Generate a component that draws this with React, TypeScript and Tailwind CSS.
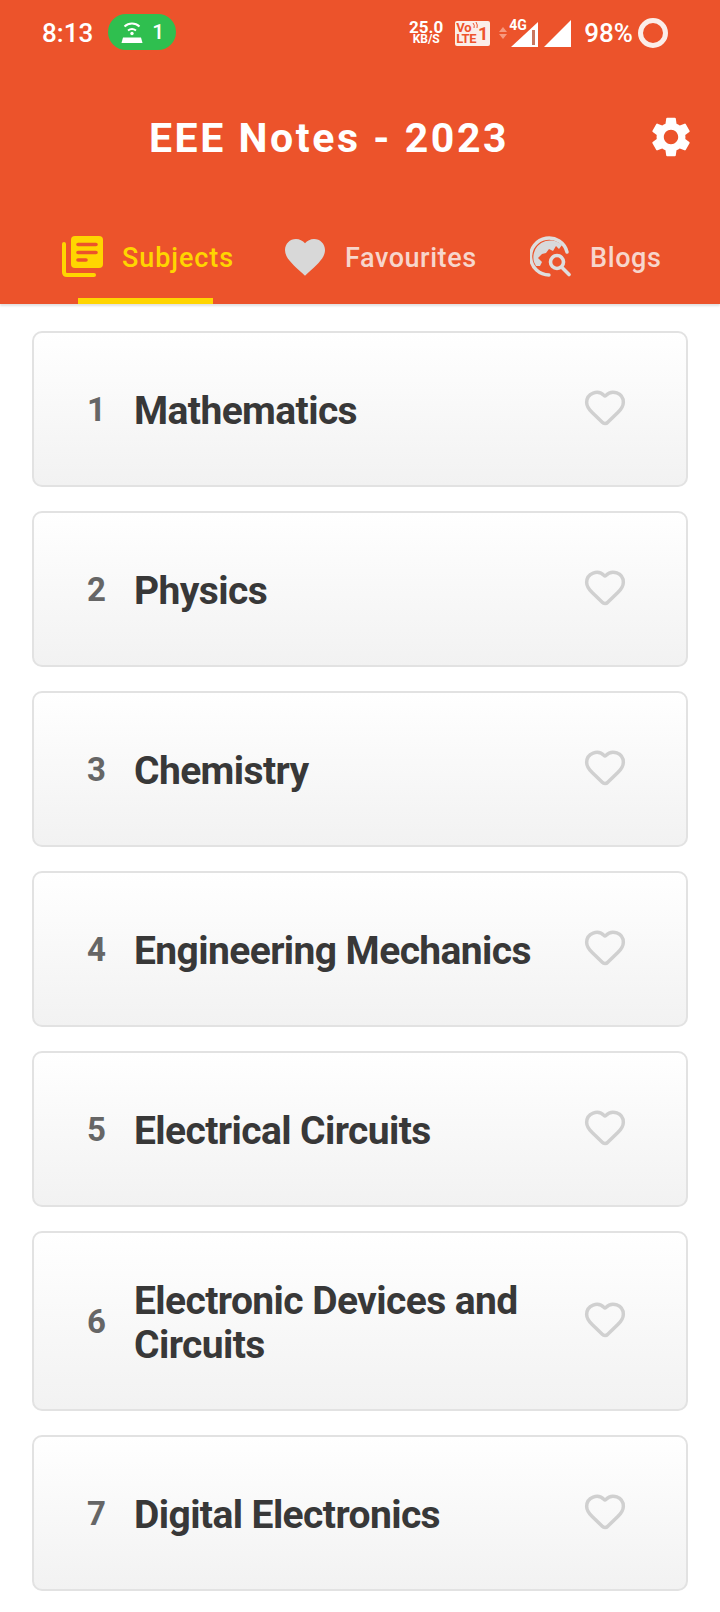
import { Heart } from 'lucide-react';
import { MdFavorite, MdSettings } from 'react-icons/md';

const subjects = [
  'Mathematics',
  'Physics',
  'Chemistry',
  'Engineering Mechanics',
  'Electrical Circuits',
  'Electronic Devices and Circuits',
  'Digital Electronics',
];

function HotspotIcon() {
  return (
    <svg viewBox="0 0 24 24" className="h-[24px] w-[24px]" fill="none" stroke="white" aria-hidden="true">
      <path d="M4.5 6.5a11 11 0 0 1 15 0" strokeWidth="2" />
      <path d="M8 10.5a6.5 6.5 0 0 1 8 0" strokeWidth="2" />
      <circle cx="12" cy="13.5" r="1.7" fill="white" stroke="none" />
      <path d="M1.5 23l1.5-5.5h18l1.5 5.5z" fill="white" stroke="none" />
    </svg>
  );
}

function VolteBadge() {
  return (
    <div className="relative flex h-[25px] w-[35px] items-stretch rounded-[2px] bg-[#fbeee9] pl-[1px] text-[#ee532c]">
      <div className="flex flex-col items-start justify-center font-bold">
        <span className="text-[13px] leading-[11px] tracking-[-0.3px]">Vo</span>
        <span className="text-[13px] leading-[11px] tracking-[-0.3px]">LTE</span>
      </div>
      <svg viewBox="0 0 8 8" className="absolute left-[16px] top-[1px] h-[8px] w-[8px]" fill="none" stroke="#ee532c" strokeWidth="1" aria-hidden="true">
        <path d="M2 1q2 2 1 5M5 0q2 3 1 6" />
      </svg>
      <span className="absolute right-[2px] top-[4px] text-[18px] font-bold leading-none">1</span>
    </div>
  );
}

function SignalIcon({ withBar }: { withBar?: boolean }) {
  return (
    <svg viewBox="0 0 27 27" className="h-[27px] w-[27px]" aria-hidden="true">
      <path d={withBar ? 'M0 27 27 2v25z' : 'M0 27 27 0v27z'} fill="white" />
      {withBar && <path d="M21 10h3v15h-3z" fill="#c9775f" />}
    </svg>
  );
}

function SubjectsIcon() {
  return (
    <svg viewBox="0 0 41 41" className="h-[41px] w-[41px]" aria-hidden="true">
      <path d="M2 8v28q0 3 3 3h27" fill="none" stroke="#ffd500" strokeWidth="4" strokeLinecap="round" />
      <rect x="9" y="0" width="32" height="32" rx="4" fill="#ffd500" />
      <path d="M16 8.5h18M16 16.5h18M16 24h8" stroke="#ec532b" strokeWidth="3.6" strokeLinecap="round" />
    </svg>
  );
}

function BlogsIcon() {
  return (
    <svg viewBox="0 0 41 41" className="h-[41px] w-[41px]" aria-hidden="true">
      <path d="M19 39A18.5 18.5 0 1 1 37 16" fill="none" stroke="#dedede" strokeWidth="3.4" strokeLinecap="round" />
      <path d="M4 26A17 17 0 0 1 32 9L29 13 26 10 23 15 19 13 16 17 12 18 8 22 12 26 10 30 6 30z" fill="#d8d9db" />
      <circle cx="27" cy="26" r="6.5" fill="none" stroke="#dedede" strokeWidth="3.6" />
      <path d="M32 31.5l7 7" stroke="#dedede" strokeWidth="3.6" strokeLinecap="round" />
    </svg>
  );
}

function StatusBar() {
  return (
    <div className="flex h-[66px] items-center pl-[42px] pr-[52px] text-white">
      <span className="text-[26px] font-medium leading-none">8:13</span>
      <div className="ml-[15px] flex h-[36px] w-[68px] -translate-y-[1px] items-center justify-center gap-[8px] rounded-full bg-[#2fbf4f]">
        <HotspotIcon />
        <span className="text-[21px] font-medium leading-none">1</span>
      </div>
      <div className="ml-auto flex flex-col items-center font-bold">
        <span className="text-[17px] leading-[13px]">25.0</span>
        <span className="text-[12px] leading-[11px]">KB/S</span>
      </div>
      <div className="ml-[12px]">
        <VolteBadge />
      </div>
      <div className="ml-[9px] flex flex-col gap-[2px]">
        <span className="h-0 w-0 border-x-[4px] border-b-[5px] border-x-transparent border-b-[#f79a80]" />
        <span className="h-0 w-0 border-x-[4px] border-t-[5px] border-x-transparent border-t-[#f79a80]" />
      </div>
      <div className="relative ml-[4px]">
        <SignalIcon withBar />
        <span className="absolute left-[-2px] top-[-2px] text-[14px] font-bold leading-none">4G</span>
      </div>
      <div className="ml-[6px]">
        <SignalIcon />
      </div>
      <span className="ml-[13px] text-[26px] font-medium leading-none">98%</span>
      <div className="ml-[5px] h-[30px] w-[30px] rounded-full border-[5px] border-[#fbeee9]" />
    </div>
  );
}

function Tabs() {
  return (
    <div className="mt-[26px] flex h-[68px]">
      <div className="relative flex w-[281px] items-start pl-[62px]">
        <SubjectsIcon />
        <span className="ml-[19px] mt-[6px] text-[27px] font-medium leading-[32px] tracking-[0.9px] text-[#ffd500]">Subjects</span>
        <div className="absolute bottom-0 left-[78px] h-[6px] w-[135px] bg-[#ffd500]" />
      </div>
      <div className="flex w-[249px] items-start">
        <MdFavorite className="h-[48px] w-[48px] -translate-y-[3px] text-[#d8d8d8]" />
        <span className="ml-[16px] mt-[6px] text-[27px] font-medium leading-[32px] tracking-[0.55px] text-[#f7d6cc]">Favourites</span>
      </div>
      <div className="flex items-start">
        <BlogsIcon />
        <span className="ml-[19px] mt-[6px] text-[27px] font-medium leading-[32px] tracking-[0.6px] text-[#f7d6cc]">Blogs</span>
      </div>
    </div>
  );
}

function SubjectCard({ index, name }: { index: number; name: string }) {
  return (
    <div className="flex min-h-[156px] items-center rounded-[10px] border-2 border-[#e2e2e2] bg-gradient-to-b from-white to-[#f2f2f2] py-[44px] pl-[53px] pr-[59px]">
      <span className="w-[47px] shrink-0 text-[33px] font-bold leading-none text-[#666666]">{index}</span>
      <span className="flex-1 translate-y-[2px] text-[39px] font-bold leading-[44px] tracking-[-0.6px] text-[#383838]">{name}</span>
      <Heart className="-translate-y-[2px] h-[44px] w-[44px] shrink-0 text-[#d0d0d0]" strokeWidth={1.9} />
    </div>
  );
}

export default function App() {
  return (
    <div className="h-[1612px] w-[720px] overflow-hidden bg-white font-['Roboto',sans-serif]">
      <header className="h-[304px] bg-[#ec532b] shadow-[0_2px_2px_rgba(0,0,0,0.12)]">
        <StatusBar />
        <div className="flex h-[144px] items-center pl-[149px] pr-[25px]">
          <h1 className="translate-y-[1px] text-[41px] font-bold tracking-[2.56px] text-white">EEE Notes - 2023</h1>
          <MdSettings className="ml-auto h-[48px] w-[48px] -translate-y-[1px] text-white" />
        </div>
        <Tabs />
      </header>
      <main className="flex flex-col gap-[24px] px-[32px] pt-[27px]">
        {subjects.map((name, i) => (
          <SubjectCard key={name} index={i + 1} name={name} />
        ))}
      </main>
    </div>
  );
}
